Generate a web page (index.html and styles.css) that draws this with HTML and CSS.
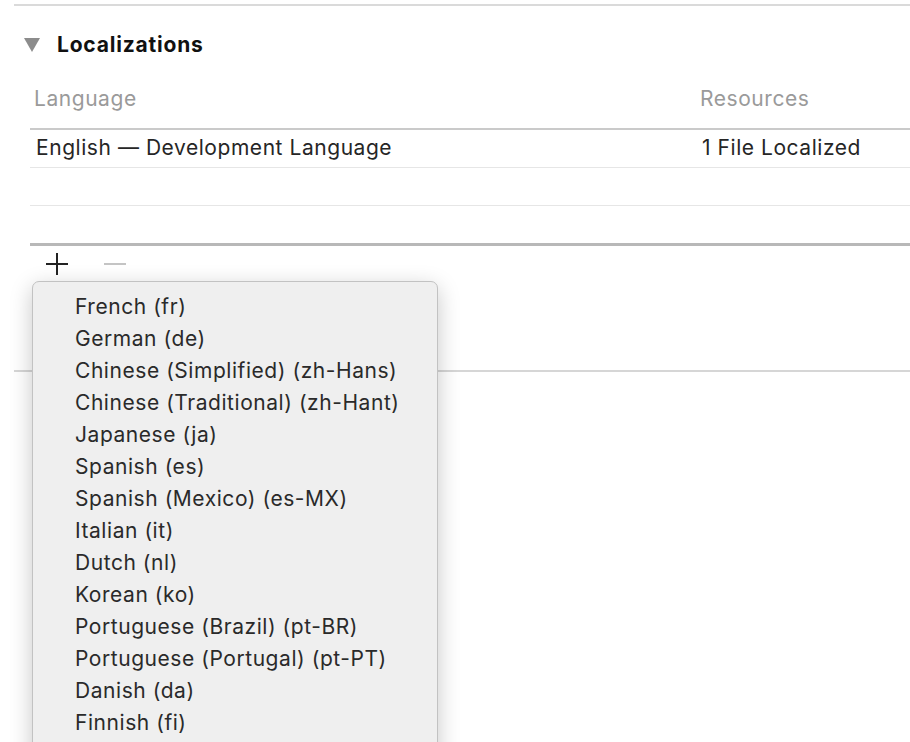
FILE: index.html
```html
<!DOCTYPE html>
<html>
<head>
<meta charset="utf-8">
<link rel="stylesheet" href="styles.css">
</head>
<body>
<div class="page">
  <div class="top-rule"></div>
  <div class="section-head">
    <span class="disclosure"></span>
    <span class="section-title">Localizations</span>
  </div>
  <div class="table">
    <div class="thead">
      <div class="col-lang">Language</div>
      <div class="col-res">Resources</div>
    </div>
    <div class="row">
      <div class="col-lang">English — Development Language</div>
      <div class="col-res">1 File Localized</div>
    </div>
    <div class="row"></div>
    <div class="row last"></div>
  </div>
  <div class="controls">
    <span class="btn-plus"></span>
    <span class="btn-minus"></span>
    <div class="menu">
      <div class="item">French (fr)</div>
      <div class="item">German (de)</div>
      <div class="item">Chinese (Simplified) (zh-Hans)</div>
      <div class="item">Chinese (Traditional) (zh-Hant)</div>
      <div class="item">Japanese (ja)</div>
      <div class="item">Spanish (es)</div>
      <div class="item">Spanish (Mexico) (es-MX)</div>
      <div class="item">Italian (it)</div>
      <div class="item">Dutch (nl)</div>
      <div class="item">Korean (ko)</div>
      <div class="item">Portuguese (Brazil) (pt-BR)</div>
      <div class="item">Portuguese (Portugal) (pt-PT)</div>
      <div class="item">Danish (da)</div>
      <div class="item">Finnish (fi)</div>
    </div>
  </div>
  <div class="bottom-rule"></div>
</div>
</body>
</html>
```
FILE: styles.css
```css
html, body {
  margin: 0;
  padding: 0;
  background: #ffffff;
  overflow: hidden;
  height: 742px;
}
body {
  font-family: "Inter", "Liberation Sans", sans-serif;
  font-size: 21px;
  letter-spacing: 0.55px;
  color: #262626;
}
.page {
  padding-left: 14px;
  padding-top: 4px;
}
.top-rule {
  height: 2px;
  background: #dadada;
}
.section-head {
  display: flex;
  align-items: center;
  height: 80px;
  margin-top: -2px;
}
.disclosure {
  width: 0;
  height: 0;
  margin-left: 10px;
  margin-top: 2px;
  border-left: 8px solid transparent;
  border-right: 8px solid transparent;
  border-top: 14px solid #8c8c8c;
}
.section-title {
  margin-left: 17px;
  font-weight: 700;
  color: #111;
  letter-spacing: 0.8px;
}
.table {
  margin-left: 16px;
}
.thead {
  display: flex;
  align-items: center;
  height: 52px;
  padding-bottom: 4px;
  margin-top: -12px;
  border-bottom: 2px solid #cacaca;
  color: #9a9a9a;
}
.col-lang {
  padding-left: 4px;
  width: 666px;
}
.row {
  display: flex;
  align-items: center;
  height: 34px;
  padding-bottom: 3px;
  border-bottom: 1px solid #e6e6e6;
}
.row .col-lang {
  padding-left: 6px;
  width: 666px;
}
.row.last {
  border-bottom: 3px solid #b8b8b8;
}
.controls {
  position: relative;
  height: 124px;
  display: flex;
  align-items: flex-start;
  padding-left: 32px;
  padding-top: 7px;
  box-sizing: border-box;
}
.btn-plus {
  position: relative;
  width: 22px;
  height: 22px;
}
.btn-plus::before, .btn-plus::after {
  content: "";
  position: absolute;
  background: #222;
}
.btn-plus::before {
  left: 0;
  top: 10px;
  width: 22px;
  height: 2px;
}
.btn-plus::after {
  left: 10px;
  top: 0;
  width: 2px;
  height: 22px;
}
.btn-minus {
  margin-left: 36px;
  margin-top: 10px;
  width: 22px;
  height: 2px;
  background: #c4c4c4;
}
.menu {
  position: absolute;
  left: 18px;
  top: 35px;
  width: 404px;
  height: 480px;
  background: #efefef;
  border: 1px solid #c2c2c2;
  border-radius: 7px;
  box-shadow: 0 6px 22px rgba(0, 0, 0, 0.22);
  padding-top: 9px;
  z-index: 2;
}
.item {
  height: 32px;
  line-height: 32px;
  padding-left: 42px;
  color: #2a2a2a;
}
.bottom-rule {
  height: 2px;
  background: #d6d6d6;
}
```
